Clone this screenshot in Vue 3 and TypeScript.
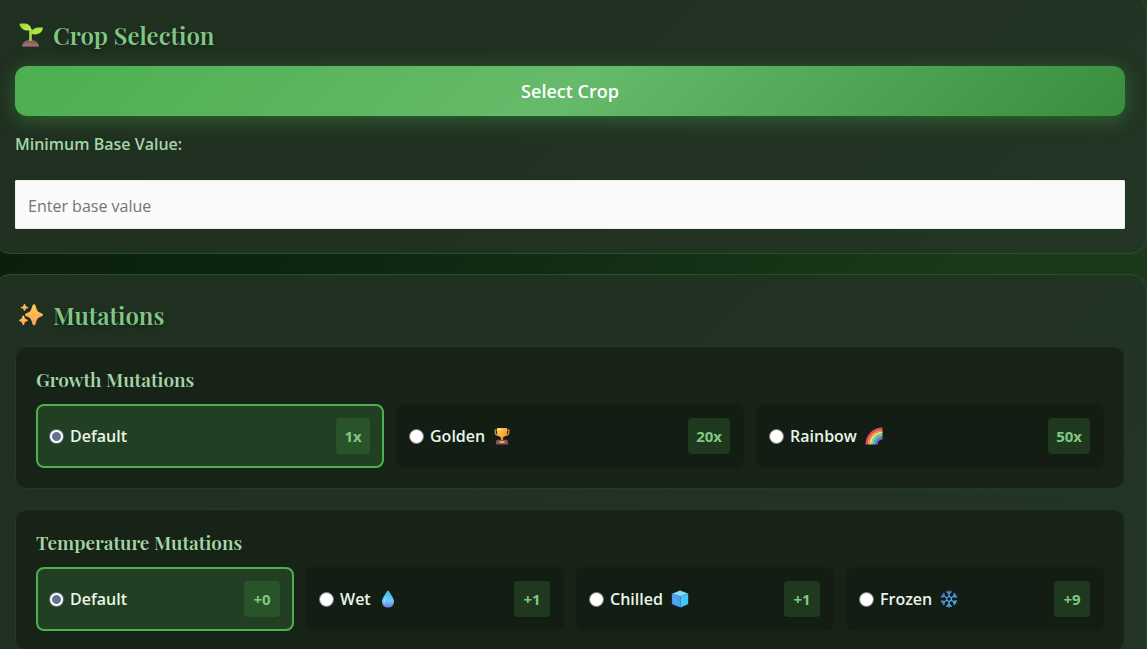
<script setup lang="ts">
import { ref } from 'vue'

interface Option {
  name: string
  icon?: string
  value: string
}

interface Group {
  id: string
  title: string
  columns: string
  options: Option[]
}

const baseValue = ref('')
const selected = ref<Record<string, string>>({ growth: 'Default', temperature: 'Default' })

const groups: Group[] = [
  {
    id: 'growth',
    title: 'Growth Mutations',
    columns: 'three',
    options: [
      { name: 'Default', value: '1x' },
      { name: 'Golden', icon: 'trophy', value: '20x' },
      { name: 'Rainbow', icon: 'rainbow', value: '50x' },
    ],
  },
  {
    id: 'temperature',
    title: 'Temperature Mutations',
    columns: 'four',
    options: [
      { name: 'Default', value: '+0' },
      { name: 'Wet', icon: 'drop', value: '+1' },
      { name: 'Chilled', icon: 'ice', value: '+1' },
      { name: 'Frozen', icon: 'snow', value: '+9' },
    ],
  },
]
</script>

<template>
  <main class="page">
    <section class="panel">
      <h2 class="heading">
        <svg class="heading-icon" viewBox="0 0 24 24" aria-hidden="true">
          <defs>
            <linearGradient id="leaf" x1="0" y1="0" x2="1" y2="1">
              <stop offset="0" stop-color="#8fdc3c" />
              <stop offset="1" stop-color="#c8f04c" />
            </linearGradient>
            <linearGradient id="soil" x1="0" y1="0" x2="0" y2="1">
              <stop offset="0" stop-color="#7d4e4e" />
              <stop offset="1" stop-color="#a9787c" />
            </linearGradient>
          </defs>
          <path d="M3 23.500C3.500 19.500 7 16.500 11.500 16.500s8 3 8.500 7z" fill="url(#soil)" />
          <path d="M10.200 6h2.600v11.500q-1.300.8-2.600 0z" fill="#a5dc43" />
          <path d="M.3.800C4 .2 8 .2 10 2q2.300 1.800 2.600 5.200C7 8.200 2 7.200.3.800z" fill="url(#leaf)" />
          <path d="M12 10.700C12.500 5.500 16 4 24 4.600 23 10.800 18 12.500 12 10.700z" fill="url(#leaf)" />
        </svg>
        Crop Selection
      </h2>
      <button type="button" class="select-crop">Select Crop</button>
      <label class="field-label" for="base-value">Minimum Base Value:</label>
      <input id="base-value" v-model="baseValue" class="field" type="text" placeholder="Enter base value" />
    </section>

    <section class="panel">
      <h2 class="heading">
        <svg class="heading-icon" viewBox="0 0 24 24" aria-hidden="true">
          <defs>
            <linearGradient id="spark" x1="0" y1="0" x2="0" y2="1">
              <stop offset="0" stop-color="#ffcf4a" />
              <stop offset="1" stop-color="#ff9a62" />
            </linearGradient>
          </defs>
          <g fill="url(#spark)">
            <path d="M15 1.200q1.100 0 1.500 1.300l1.300 4q.8 2.300 3 3.100l2.200.8q1 .4 1 1.400t-1 1.400l-2.200.8q-2.200.8-3 3.100l-1.300 4q-.4 1.300-1.500 1.300t-1.500-1.300l-1.300-4q-.8-2.300-3-3.100l-2.200-.8q-1-.4-1-1.400t1-1.400l2.200-.8q2.200-.8 3-3.100l1.300-4Q13.900 1.200 15 1.200z" />
            <path d="M5.500 1q.6 0 .8.700l.4 1.200.5.500 1.200.4q.7.200.7.700t-.7.700l-1.200.4-.5.500-.4 1.200q-.2.700-.8.700t-.8-.7l-.4-1.200-.5-.5-1.200-.4q-.7-.2-.7-.7t.7-.7l1.200-.4.5-.5.4-1.200q.2-.7.800-.7z" />
            <path d="M4.300 12.500q.8 0 1 .9l.5 1.700.8.800 1.500.5q.8.300.8.900t-.8.900l-1.500.5-.8.800-.5 1.700q-.2.900-1 .9t-1-.9l-.5-1.700-.8-.8-1.200-.5q-.8-.3-.8-.9t.8-.9l1.200-.5.8-.8.500-1.700q.2-.9 1-.9z" />
          </g>
        </svg>
        Mutations
      </h2>

      <div class="groups">
        <fieldset v-for="group in groups" :key="group.id" class="group" :aria-labelledby="group.id">
          <h3 :id="group.id" class="group-title">{{ group.title }}</h3>
          <div class="options" :class="group.columns">
            <label
              v-for="option in group.options"
              :key="option.name"
              class="option"
              :class="{ active: selected[group.id] === option.name }"
            >
              <input v-model="selected[group.id]" class="radio" type="radio" :name="group.id" :value="option.name" />
              <span class="name">{{ option.name }}</span>

              <svg v-if="option.icon === 'trophy'" class="icon" viewBox="0 0 18 18" aria-hidden="true">
                <defs>
                  <linearGradient id="gold" x1="0" y1="0" x2="1" y2="1">
                    <stop offset="0" stop-color="#ffd45a" />
                    <stop offset="1" stop-color="#f08a24" />
                  </linearGradient>
                </defs>
                <path d="M4.500 3H2.200v2q0 3.200 3.500 3.400M13.500 3h2.300v2q0 3.200-3.500 3.400" fill="none" stroke="#e99a35" stroke-width="1.200" />
                <path d="M4 1h10v4.500q0 3.500-3.300 4.500L10 11v2H8v-2l-.7-1Q4 9 4 5.500z" fill="url(#gold)" />
                <path d="M4.500 12.800h9q1 0 1.200 1l.6 3.700H2.700l.6-3.700q.2-1 1.200-1z" fill="#8b5064" />
                <path d="M6.500 14.200h5V16h-5z" fill="#f2b445" />
                <path d="M5.500 2h3v1h-3z" fill="#ffeb9c" />
              </svg>

              <svg v-else-if="option.icon === 'rainbow'" class="icon" viewBox="0 0 18 18" aria-hidden="true">
                <g fill="none" stroke-width="2.100">
                  <path d="M1.500 17.500C1.500 8.500 8.500 1.500 17.500 1.500" stroke="#e8476a" />
                  <path d="M3.500 17.500C3.500 9.600 9.600 3.500 17.500 3.500" stroke="#f88a4b" />
                  <path d="M5.500 17.500C5.500 10.700 10.700 5.500 17.500 5.500" stroke="#ffe16a" />
                  <path d="M7.500 17.500C7.500 11.800 11.800 7.500 17.500 7.500" stroke="#7fd69d" />
                  <path d="M9.500 17.500C9.500 12.900 12.900 9.500 17.500 9.500" stroke="#48b5ee" />
                  <path d="M11.500 17.500C11.500 14 14 11.500 17.500 11.500" stroke="#8961bd" />
                </g>
              </svg>

              <svg v-else-if="option.icon === 'drop'" class="icon" viewBox="0 0 18 18" aria-hidden="true">
                <defs>
                  <linearGradient id="water" x1="0" y1="0" x2="0" y2="1">
                    <stop offset="0" stop-color="#41b3e8" />
                    <stop offset=".6" stop-color="#69cbff" />
                    <stop offset="1" stop-color="#777be8" />
                  </linearGradient>
                </defs>
                <path d="M9 .5q.6 0 1 .8C11.500 4.300 15 8 15 11.800q0 2.500-1.700 4.100T9 17.500t-4.300-1.600T3 11.800C3 8 6.500 4.300 8 1.300q.4-.8 1-.8z" fill="url(#water)" />
                <path d="M6.800 7.500q-2.300 3.300-1.300 5" fill="none" stroke="#9bdfff" stroke-width="1" stroke-linecap="round" />
              </svg>

              <svg v-else-if="option.icon === 'ice'" class="icon" viewBox="0 0 18 18" aria-hidden="true">
                <path d="M9 .5 17 3.500 9.500 6.500 1 3.800z" fill="#7fdcfb" />
                <path d="M.8 3.800 9.500 6.500V17.500L1.800 14.500q-.8-.3-.9-1.200z" fill="#4b9df2" />
                <path d="M9.500 6.500 17.200 3.500v9.800q0 .8-.8 1.200L9.500 17.500z" fill="#43c4fa" />
                <path d="m3 8 3.500 6M11.500 13 15 7" stroke="#60bff8" stroke-width="1" />
              </svg>

              <svg v-else-if="option.icon === 'snow'" class="icon" viewBox="0 0 18 18" aria-hidden="true">
                <defs>
                  <linearGradient id="frost" gradientUnits="userSpaceOnUse" x1="1" y1="2" x2="15" y2="16">
                    <stop offset="0" stop-color="#567bea" />
                    <stop offset="1" stop-color="#45c8f4" />
                  </linearGradient>
                </defs>
                <g fill="none" stroke="url(#frost)" stroke-width="1.300" stroke-linecap="round" stroke-linejoin="round">
                  <path d="m9 6.400 2.300 1.300v2.600L9 11.600l-2.300-1.300V7.700z" />
                  <path d="M9 6.400 9.010 1M9 11.600 9.010 17M11.300 7.700 16 5M6.700 7.700 2 5M11.300 10.300 16 13M6.700 10.300 2 13" />
                  <path d="m6.800 1.800 2.200 2 2.200-2M6.800 16.200l2.200-2 2.200 2M14.300 3.300l-.7 3 2.900.9M3.700 3.300l.7 3-2.900.9M14.300 14.700l-.7-3 2.900-.9M3.700 14.700l.7-3-2.900-.9" />
                </g>
              </svg>

              <span class="badge">{{ option.value }}</span>
            </label>
          </div>
        </fieldset>
      </div>
    </section>
  </main>
</template>

<style>
html {
  scrollbar-width: none;
  background: #0c210e;
}

body {
  margin: 0;
}
</style>

<style scoped>
.page {
  display: flex;
  flex-direction: column;
  gap: 20px;
  margin: -6px 0 0 -6px;
  padding-bottom: 20px;
  overflow: hidden;
  background: linear-gradient(120deg, #081c0a 0%, #0e2711 35%, #1b3a19 75%);
  color: #e8f5e9;
  font-family: "Segoe UI", "Open Sans", "Noto Sans", sans-serif;
  font-size: 16px;
}

.panel {
  display: flex;
  flex-direction: column;
  box-sizing: border-box;
  padding: 20px 21px 24px 20px;
  border: 1px solid #2a4f2c;
  border-radius: 16px;
  background: linear-gradient(135deg, #1f2f20, #233524);
}

.heading {
  display: flex;
  align-items: center;
  gap: 10px;
  height: 40px;
  margin: 0 0 11px;
  padding-left: 4px;
  color: #81c784;
  font-family: "Playfair Display", "Liberation Serif", serif;
  font-size: 24px;
  font-weight: 600;
  text-shadow: 0 2px 4px rgba(0, 0, 0, 0.3);
}

.heading-icon {
  width: 24px;
  height: 24px;
}

.select-crop {
  height: 50px;
  border: 0;
  border-radius: 12px;
  background: linear-gradient(135deg, #4caf50 0%, #66bb6a 50%, #388e3c 100%);
  box-shadow: 0 4px 20px rgba(76, 175, 80, 0.4);
  color: #fff;
  font-family: inherit;
  font-size: 18px;
  font-weight: 600;
}

.field-label {
  margin: 16px 0 24px;
  color: #a5d6a7;
  font-weight: 600;
  line-height: 24px;
}

.field {
  box-sizing: border-box;
  width: 100%;
  height: 49px;
  padding: 2px 12px 0;
  border: 1px solid #e8f0e8;
  border-radius: 1px;
  background: #fafafa;
  color: #222;
  font-family: inherit;
  font-size: 16px;
}

.field::placeholder {
  color: #757575;
}

.groups {
  display: flex;
  flex-direction: column;
  gap: 20px;
}

.group {
  min-width: 0;
  margin: 0;
  padding: 20px;
  border: 1px solid #243a26;
  border-radius: 12px;
  background: #182318;
}

.group-title {
  margin: 0 0 13px;
  color: #a5d6a7;
  font-family: "Playfair Display", "Liberation Serif", serif;
  font-size: 19px;
  font-weight: 600;
  line-height: 24px;
}

.options {
  display: grid;
  gap: 12px;
}

.three {
  grid-template-columns: repeat(3, 1fr);
}

.four {
  grid-template-columns: repeat(4, 1fr);
}

.option {
  display: flex;
  align-items: center;
  padding: 12px 12px 12px 11px;
  border: 2px solid transparent;
  border-radius: 8px;
  background: #131d13;
  font-weight: 600;
}

.option.active {
  border-color: #4caf50;
  background: #223f23;
}

.radio {
  flex: none;
  appearance: none;
  width: 15px;
  height: 15px;
  margin: 0 6px 0 0;
  border: 1px solid #767676;
  border-radius: 50%;
  background: #fff;
}

.radio:checked {
  border-color: #64748b;
  background: radial-gradient(circle, #64748b 4px, #fff 5px);
}

.icon {
  width: 18px;
  height: 18px;
  margin-left: 8px;
}

.badge {
  box-sizing: border-box;
  min-width: 34px;
  margin-left: auto;
  padding: 0 8px;
  border-radius: 4px;
  background: #1f391f;
  color: #81c784;
  font-size: 15px;
  font-weight: 700;
  line-height: 36px;
  text-align: center;
}

.four .badge {
  min-width: 36px;
}

.active .badge {
  background: #295329;
}
</style>
